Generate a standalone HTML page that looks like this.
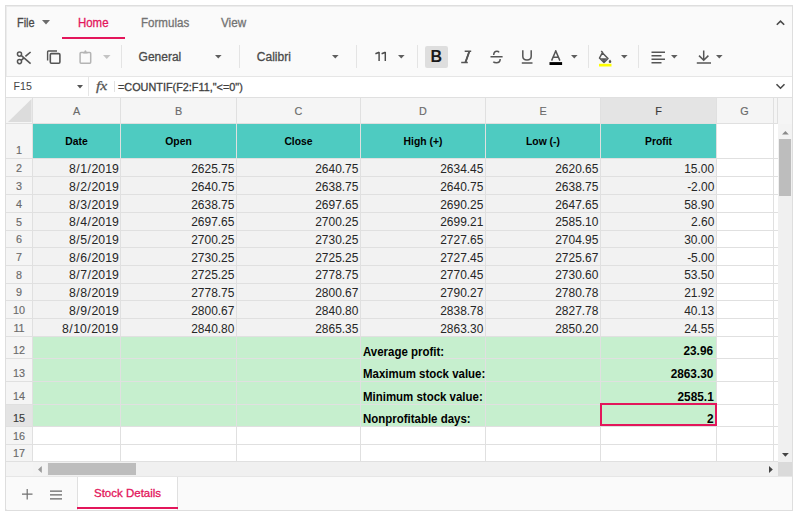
<!DOCTYPE html><html><head><meta charset="utf-8"><style>
*{box-sizing:border-box;margin:0;padding:0}
html,body{width:800px;height:518px;overflow:hidden;background:#fff;font-family:"Liberation Sans", sans-serif}
.a{position:absolute}
.t{position:absolute;white-space:nowrap;line-height:1}
.rb{-webkit-text-stroke:0.3px currentColor}
.lb{-webkit-text-stroke:0.15px currentColor}
.hl{position:absolute;height:1px;background:#e0e0e0}
.vl{position:absolute;width:1px;background:#e0e0e0}
.cell{position:absolute;white-space:nowrap;font-size:12px;color:#000;line-height:1}
</style></head><body>
<div class="a" style="left:5px;top:5px;width:788px;height:506px;border:1px solid #dedede;box-shadow:inset 1px 1px 0 #ececec;background:#fafafa"></div>
<div class="t rb" style="left:17px;top:17px;font-size:12px;color:#4a4a4a;transform-origin:left;transform:scaleX(0.91)">File</div>
<svg class="a" style="left:42px;top:20px" width="8" height="5"><path d="M0 0H8L4 4.5Z" fill="#6b6b6b"/></svg>
<div class="t rb" style="left:77.7px;top:17px;font-size:12.3px;color:#e3165b;transform-origin:left;transform:scaleX(0.93)">Home</div>
<div class="a" style="left:62px;top:36.8px;width:63px;height:2px;background:#e3165b"></div>
<div class="t rb" style="left:140.6px;top:17px;font-size:12.3px;color:#737373;transform-origin:left;transform:scaleX(0.94)">Formulas</div>
<div class="t rb" style="left:221px;top:17px;font-size:12.3px;color:#737373;transform-origin:left;transform:scaleX(0.95)">View</div>
<svg class="a" style="left:775px;top:17.6px" width="11" height="9"><path d="M1.8 6.8L5.5 3.1L9.2 6.8" stroke="#4a4a4a" stroke-width="1.6" fill="none"/></svg>
<svg class="a" style="left:15px;top:49.6px" width="17" height="15" viewBox="0 0 17 15">
<circle cx="4.5" cy="4.1" r="2.05" stroke="#555" stroke-width="1.5" fill="none"/>
<circle cx="4.5" cy="11.6" r="2.05" stroke="#555" stroke-width="1.5" fill="none"/>
<path d="M6.1 5.4L15.6 13.6" stroke="#555" stroke-width="1.6" fill="none"/>
<path d="M6.1 10.4L8.8 8.2" stroke="#555" stroke-width="1.6" fill="none"/>
<path d="M10.4 6.3L15.6 2" stroke="#555" stroke-width="1.6" fill="none"/>
</svg>
<svg class="a" style="left:46px;top:49px" width="16" height="16" viewBox="0 0 16 16">
<path d="M1.6 11.6V2.8Q1.6 2 2.4 2H11" stroke="#555" stroke-width="1.4" fill="none"/>
<rect x="4.3" y="4.6" width="9.6" height="9.6" rx="1.1" stroke="#555" stroke-width="1.6" fill="none"/>
</svg>
<svg class="a" style="left:78px;top:49px" width="15" height="16" viewBox="0 0 15 16">
<rect x="2.1" y="3.6" width="10.6" height="10.6" rx="0.9" stroke="#b4b4b4" stroke-width="1.5" fill="none"/>
<path d="M5.2 4.6V3.3H6.2Q6.3 1.2 7.4 1.2Q8.5 1.2 8.6 3.3H9.6V4.6Z" fill="#b4b4b4"/>
</svg>
<svg class="a" style="left:103px;top:55px" width="8" height="5"><path d="M0 0H7.5L3.75 4Z" fill="#c4c4c4"/></svg>
<div class="a" style="left:121px;top:45px;width:1px;height:23px;background:#e4e4e4"></div>
<div class="t rb" style="left:138.6px;top:51px;font-size:12px;color:#4a4a4a">General</div>
<svg class="a" style="left:214.5px;top:55px" width="8" height="5"><path d="M0 0H6.6L3.3 3.5Z" fill="#5e5e5e"/></svg>
<div class="a" style="left:239px;top:45px;width:1px;height:23px;background:#e4e4e4"></div>
<div class="t rb" style="left:256.8px;top:51px;font-size:12px;color:#4a4a4a">Calibri</div>
<svg class="a" style="left:332px;top:55px" width="8" height="5"><path d="M0 0H6.6L3.3 3.5Z" fill="#5e5e5e"/></svg>
<div class="a" style="left:356px;top:45px;width:1px;height:23px;background:#e4e4e4"></div>
<svg class="a" style="left:374px;top:51px" width="14" height="11" viewBox="0 0 14 11"><path d="M5.1 1.1V10M5.3 1.2L1.4 2.7M11.3 1.1V10M11.5 1.2L7.6 2.7" stroke="#4a4a4a" stroke-width="1.45" fill="none"/></svg>
<svg class="a" style="left:397.6px;top:55px" width="8" height="5"><path d="M0 0H6.6L3.3 3.5Z" fill="#5e5e5e"/></svg>
<div class="a" style="left:417px;top:45px;width:1px;height:23px;background:#e4e4e4"></div>
<div class="a" style="left:424.5px;top:46px;width:23px;height:22px;background:#dedede;border-radius:2px"></div>
<div class="t" style="left:430.6px;top:49.1px;font-size:16px;font-weight:bold;color:#1a1a1a">B</div>
<svg class="a" style="left:460px;top:50px" width="13" height="14" viewBox="0 0 13 14">
<path d="M4.7 1.2H11.2M1.2 12.5H7.8M9.4 1.2L5.4 12.5" stroke="#555" stroke-width="1.5" fill="none"/><path d="M9.4 1.2L5.4 12.5" stroke="#555" stroke-width="1.9" fill="none"/></svg>
<svg class="a" style="left:489px;top:50px" width="15" height="14" viewBox="0 0 15 14">
<path d="M4.7 4.9C4.7 2.3 6.1 1.3 7.9 1.3C8.9 1.3 9.7 1.7 10.1 2.3M1.5 6.7H13.6M11.2 9C11.2 11.8 9.5 12.8 7.4 12.8C6 12.8 4.8 12.3 4.3 11.7" stroke="#555" stroke-width="1.5" fill="none"/></svg>
<svg class="a" style="left:519.5px;top:49px" width="14" height="16" viewBox="0 0 14 16">
<path d="M2.8 1.2V7.3Q2.8 11 7 11Q11.2 11 11.2 7.3V1.2M1.8 13.9H12.5" stroke="#555" stroke-width="1.5" fill="none"/></svg>
<svg class="a" style="left:549px;top:50px" width="14" height="16" viewBox="0 0 14 16">
<path d="M2.6 10.6L6.75 0.9L10.9 10.6M4.1 7.2H9.4" stroke="#555" stroke-width="1.5" fill="none"/>
<rect x="0.5" y="12.1" width="12.6" height="2.9" fill="#000"/></svg>
<svg class="a" style="left:571px;top:55px" width="8" height="5"><path d="M0 0H6.6L3.3 3.5Z" fill="#5e5e5e"/></svg>
<div class="a" style="left:588px;top:45px;width:1px;height:23px;background:#e4e4e4"></div>
<svg class="a" style="left:598.3px;top:49.7px" width="15" height="17" viewBox="0 0 15 17">
<path d="M3.2 1L5 2.8M4.3 2.8L10 8.5L6 12.5L1.5 8Z" stroke="#555" stroke-width="1.5" fill="none" stroke-linejoin="round"/>
<path d="M2.6 8.3L9.3 8.3L6 11.6Z" fill="#555"/>
<path d="M12 9.5Q13.3 11 13.3 11.8A1.3 1.3 0 0 1 10.7 11.8Q10.7 11 12 9.5Z" fill="#555"/>
<rect x="1" y="13.8" width="12.5" height="2.7" fill="#ffff00"/></svg>
<svg class="a" style="left:620.5px;top:55px" width="8" height="5"><path d="M0 0H6.6L3.3 3.5Z" fill="#5e5e5e"/></svg>
<div class="a" style="left:638px;top:45px;width:1px;height:23px;background:#e4e4e4"></div>
<svg class="a" style="left:651.3px;top:50.6px" width="15" height="14" viewBox="0 0 15 14">
<path d="M0.5 1.3H14M0.5 4.8H10.5M0.5 8.3H14M0.5 11.8H10.5" stroke="#555" stroke-width="1.5" fill="none"/></svg>
<svg class="a" style="left:670.7px;top:55.2px" width="8" height="5"><path d="M0 0H6.6L3.3 3.5Z" fill="#5e5e5e"/></svg>
<svg class="a" style="left:696.3px;top:49.3px" width="16" height="16" viewBox="0 0 16 16">
<path d="M7.7 1.5V11M3 6.6L7.7 11.3L12.4 6.6M0.8 14H15" stroke="#555" stroke-width="1.5" fill="none"/></svg>
<svg class="a" style="left:716.3px;top:55.2px" width="8" height="5"><path d="M0 0H6.6L3.3 3.5Z" fill="#5e5e5e"/></svg>
<div class="a" style="left:6px;top:76px;width:786px;height:22px;background:#fff;border-top:1px solid #e6e6e6;border-bottom:1px solid #e0e0e0"></div>
<div class="a" style="left:88px;top:77px;width:1px;height:19px;background:#e6e6e6"></div>
<div class="t" style="left:13.6px;top:81px;font-size:10.6px;color:#444">F15</div>
<svg class="a" style="left:76.5px;top:85px" width="7" height="4"><path d="M0 0H6L3 3.5Z" fill="#555"/></svg>
<div class="t" style="left:95.5px;top:80.5px;font-size:14px;transform-origin:left top;transform:scale(1.12,0.85);font-style:italic;font-family:'Liberation Serif',serif;color:#555;-webkit-text-stroke:0.3px #555">fx</div>
<div class="a" style="left:114px;top:81px;width:1px;height:11px;background:#e2e2e2"></div>
<div class="t rb" style="left:118px;top:81.6px;font-size:10.7px;color:#3f3f3f;transform-origin:left;transform:scaleX(1.015)">=COUNTIF(F2:F11,"&lt;=0")</div>
<svg class="a" style="left:775px;top:83px" width="11" height="7"><path d="M1.5 1.2L5.5 5.2L9.5 1.2" stroke="#4a4a4a" stroke-width="1.6" fill="none"/></svg>
<div class="a" style="left:6px;top:98px;width:772px;height:364px;background:#fff"></div>
<div class="a" style="left:6px;top:98px;width:772px;height:25px;background:#f5f5f5"></div>
<div class="a" style="left:6px;top:98px;width:26px;height:364px;background:#f5f5f5"></div>
<div class="a" style="left:601px;top:98px;width:115px;height:25px;background:#e4e4e4"></div>
<div class="a" style="left:6px;top:405px;width:26px;height:21px;background:#e4e4e4"></div>
<svg class="a" style="left:8px;top:99px" width="23.5" height="23"><path d="M23.5 0V23H0Z" fill="#dcdcdc"/></svg>
<div class="a" style="left:33px;top:124px;width:683px;height:34.5px;background:#4ecbc1"></div>
<div class="a" style="left:33px;top:158.5px;width:683px;height:177.79000000000002px;background:#f2f2f2"></div>
<div class="a" style="left:33px;top:336.29px;width:683px;height:90.10999999999996px;background:#c6efce"></div>
<div class="hl" style="left:6px;top:123px;width:772px"></div>
<div class="hl" style="left:6px;top:158px;width:772px"></div>
<div class="hl" style="left:6px;top:176px;width:772px"></div>
<div class="hl" style="left:6px;top:194px;width:772px"></div>
<div class="hl" style="left:6px;top:212px;width:772px"></div>
<div class="hl" style="left:6px;top:230px;width:772px"></div>
<div class="hl" style="left:6px;top:247px;width:772px"></div>
<div class="hl" style="left:6px;top:265px;width:772px"></div>
<div class="hl" style="left:6px;top:283px;width:772px"></div>
<div class="hl" style="left:6px;top:300px;width:772px"></div>
<div class="hl" style="left:6px;top:318px;width:772px"></div>
<div class="hl" style="left:6px;top:336px;width:772px"></div>
<div class="hl" style="left:6px;top:358px;width:772px"></div>
<div class="hl" style="left:6px;top:381px;width:772px"></div>
<div class="hl" style="left:6px;top:404px;width:772px"></div>
<div class="hl" style="left:6px;top:426px;width:772px"></div>
<div class="hl" style="left:6px;top:444px;width:772px"></div>
<div class="hl" style="left:6px;top:461px;width:772px"></div>
<div class="vl" style="left:32px;top:98px;height:364px"></div>
<div class="vl" style="left:120px;top:98px;height:364px"></div>
<div class="vl" style="left:236px;top:98px;height:364px"></div>
<div class="vl" style="left:360px;top:98px;height:364px"></div>
<div class="vl" style="left:485px;top:98px;height:364px"></div>
<div class="vl" style="left:600px;top:98px;height:364px"></div>
<div class="vl" style="left:716px;top:98px;height:364px"></div>
<div class="vl" style="left:773px;top:98px;height:364px"></div>
<div class="vl" style="left:777px;top:98px;height:25px"></div>
<div class="t lb" style="left:33px;width:87px;text-align:center;top:105.8px;font-size:10.8px;color:#6a6a6a">A</div>
<div class="t lb" style="left:121px;width:115px;text-align:center;top:105.8px;font-size:10.8px;color:#6a6a6a">B</div>
<div class="t lb" style="left:237px;width:123px;text-align:center;top:105.8px;font-size:10.8px;color:#6a6a6a">C</div>
<div class="t lb" style="left:361px;width:124px;text-align:center;top:105.8px;font-size:10.8px;color:#6a6a6a">D</div>
<div class="t lb" style="left:486px;width:114px;text-align:center;top:105.8px;font-size:10.8px;color:#6a6a6a">E</div>
<div class="t lb" style="left:601px;width:115px;text-align:center;top:105.8px;font-size:10.8px;color:#3a3a3a">F</div>
<div class="t lb" style="left:717px;width:55px;text-align:center;top:105.8px;font-size:10.8px;color:#6a6a6a">G</div>
<div class="t lb" style="left:6px;width:26px;text-align:center;top:145.00px;font-size:10.8px;color:#6a6a6a">1</div>
<div class="t lb" style="left:6px;width:26px;text-align:center;top:163.40px;font-size:10.8px;color:#6a6a6a">2</div>
<div class="t lb" style="left:6px;width:26px;text-align:center;top:181.11px;font-size:10.8px;color:#6a6a6a">3</div>
<div class="t lb" style="left:6px;width:26px;text-align:center;top:198.82px;font-size:10.8px;color:#6a6a6a">4</div>
<div class="t lb" style="left:6px;width:26px;text-align:center;top:216.53px;font-size:10.8px;color:#6a6a6a">5</div>
<div class="t lb" style="left:6px;width:26px;text-align:center;top:234.24px;font-size:10.8px;color:#6a6a6a">6</div>
<div class="t lb" style="left:6px;width:26px;text-align:center;top:251.95px;font-size:10.8px;color:#6a6a6a">7</div>
<div class="t lb" style="left:6px;width:26px;text-align:center;top:269.66px;font-size:10.8px;color:#6a6a6a">8</div>
<div class="t lb" style="left:6px;width:26px;text-align:center;top:287.37px;font-size:10.8px;color:#6a6a6a">9</div>
<div class="t lb" style="left:6px;width:26px;text-align:center;top:305.08px;font-size:10.8px;color:#6a6a6a">10</div>
<div class="t lb" style="left:6px;width:26px;text-align:center;top:322.79px;font-size:10.8px;color:#6a6a6a">11</div>
<div class="t lb" style="left:6px;width:26px;text-align:center;top:345.40px;font-size:10.8px;color:#6a6a6a">12</div>
<div class="t lb" style="left:6px;width:26px;text-align:center;top:367.90px;font-size:10.8px;color:#6a6a6a">13</div>
<div class="t lb" style="left:6px;width:26px;text-align:center;top:390.70px;font-size:10.8px;color:#6a6a6a">14</div>
<div class="t lb" style="left:6px;width:26px;text-align:center;top:412.90px;font-size:10.8px;color:#3a3a3a">15</div>
<div class="t lb" style="left:6px;width:26px;text-align:center;top:430.50px;font-size:10.8px;color:#6a6a6a">16</div>
<div class="t lb" style="left:6px;width:26px;text-align:center;top:447.80px;font-size:10.8px;color:#6a6a6a">17</div>
<div class="cell" style="left:33px;width:87px;text-align:center;top:136.1px;font-weight:bold;font-size:11.5px;transform:scaleX(0.9)">Date</div>
<div class="cell" style="left:121px;width:115px;text-align:center;top:136.1px;font-weight:bold;font-size:11.5px;transform:scaleX(0.9)">Open</div>
<div class="cell" style="left:237px;width:123px;text-align:center;top:136.1px;font-weight:bold;font-size:11.5px;transform:scaleX(0.9)">Close</div>
<div class="cell" style="left:361px;width:124px;text-align:center;top:136.1px;font-weight:bold;font-size:11.5px;transform:scaleX(0.9)">High (+)</div>
<div class="cell" style="left:486px;width:114px;text-align:center;top:136.1px;font-weight:bold;font-size:11.5px;transform:scaleX(0.9)">Low (-)</div>
<div class="cell" style="left:601px;width:115px;text-align:center;top:136.1px;font-weight:bold;font-size:11.5px;transform:scaleX(0.9)">Profit</div>
<div class="cell" style="right:681.6px;top:163.20px;font-size:12px;color:#262626;transform-origin:right;transform:scaleX(1.02)">8<span style="margin:0 0.5px">/</span>1<span style="margin:0 0.5px">/</span>2019</div>
<div class="cell" style="right:565.6px;top:163.20px;font-size:12px;color:#262626;transform-origin:right;transform:scaleX(0.995)">2625.75</div>
<div class="cell" style="right:441.6px;top:163.20px;font-size:12px;color:#262626;transform-origin:right;transform:scaleX(0.995)">2640.75</div>
<div class="cell" style="right:316.6px;top:163.20px;font-size:12px;color:#262626;transform-origin:right;transform:scaleX(0.995)">2634.45</div>
<div class="cell" style="right:201.60000000000002px;top:163.20px;font-size:12px;color:#262626;transform-origin:right;transform:scaleX(0.995)">2620.65</div>
<div class="cell" style="right:85.60000000000002px;top:163.20px;font-size:12px;color:#262626;transform-origin:right;transform:scaleX(0.995)">15.00</div>
<div class="cell" style="right:681.6px;top:180.91px;font-size:12px;color:#262626;transform-origin:right;transform:scaleX(1.02)">8<span style="margin:0 0.5px">/</span>2<span style="margin:0 0.5px">/</span>2019</div>
<div class="cell" style="right:565.6px;top:180.91px;font-size:12px;color:#262626;transform-origin:right;transform:scaleX(0.995)">2640.75</div>
<div class="cell" style="right:441.6px;top:180.91px;font-size:12px;color:#262626;transform-origin:right;transform:scaleX(0.995)">2638.75</div>
<div class="cell" style="right:316.6px;top:180.91px;font-size:12px;color:#262626;transform-origin:right;transform:scaleX(0.995)">2640.75</div>
<div class="cell" style="right:201.60000000000002px;top:180.91px;font-size:12px;color:#262626;transform-origin:right;transform:scaleX(0.995)">2638.75</div>
<div class="cell" style="right:85.60000000000002px;top:180.91px;font-size:12px;color:#262626;transform-origin:right;transform:scaleX(0.995)">-2.00</div>
<div class="cell" style="right:681.6px;top:198.62px;font-size:12px;color:#262626;transform-origin:right;transform:scaleX(1.02)">8<span style="margin:0 0.5px">/</span>3<span style="margin:0 0.5px">/</span>2019</div>
<div class="cell" style="right:565.6px;top:198.62px;font-size:12px;color:#262626;transform-origin:right;transform:scaleX(0.995)">2638.75</div>
<div class="cell" style="right:441.6px;top:198.62px;font-size:12px;color:#262626;transform-origin:right;transform:scaleX(0.995)">2697.65</div>
<div class="cell" style="right:316.6px;top:198.62px;font-size:12px;color:#262626;transform-origin:right;transform:scaleX(0.995)">2690.25</div>
<div class="cell" style="right:201.60000000000002px;top:198.62px;font-size:12px;color:#262626;transform-origin:right;transform:scaleX(0.995)">2647.65</div>
<div class="cell" style="right:85.60000000000002px;top:198.62px;font-size:12px;color:#262626;transform-origin:right;transform:scaleX(0.995)">58.90</div>
<div class="cell" style="right:681.6px;top:216.33px;font-size:12px;color:#262626;transform-origin:right;transform:scaleX(1.02)">8<span style="margin:0 0.5px">/</span>4<span style="margin:0 0.5px">/</span>2019</div>
<div class="cell" style="right:565.6px;top:216.33px;font-size:12px;color:#262626;transform-origin:right;transform:scaleX(0.995)">2697.65</div>
<div class="cell" style="right:441.6px;top:216.33px;font-size:12px;color:#262626;transform-origin:right;transform:scaleX(0.995)">2700.25</div>
<div class="cell" style="right:316.6px;top:216.33px;font-size:12px;color:#262626;transform-origin:right;transform:scaleX(0.995)">2699.21</div>
<div class="cell" style="right:201.60000000000002px;top:216.33px;font-size:12px;color:#262626;transform-origin:right;transform:scaleX(0.995)">2585.10</div>
<div class="cell" style="right:85.60000000000002px;top:216.33px;font-size:12px;color:#262626;transform-origin:right;transform:scaleX(0.995)">2.60</div>
<div class="cell" style="right:681.6px;top:234.04px;font-size:12px;color:#262626;transform-origin:right;transform:scaleX(1.02)">8<span style="margin:0 0.5px">/</span>5<span style="margin:0 0.5px">/</span>2019</div>
<div class="cell" style="right:565.6px;top:234.04px;font-size:12px;color:#262626;transform-origin:right;transform:scaleX(0.995)">2700.25</div>
<div class="cell" style="right:441.6px;top:234.04px;font-size:12px;color:#262626;transform-origin:right;transform:scaleX(0.995)">2730.25</div>
<div class="cell" style="right:316.6px;top:234.04px;font-size:12px;color:#262626;transform-origin:right;transform:scaleX(0.995)">2727.65</div>
<div class="cell" style="right:201.60000000000002px;top:234.04px;font-size:12px;color:#262626;transform-origin:right;transform:scaleX(0.995)">2704.95</div>
<div class="cell" style="right:85.60000000000002px;top:234.04px;font-size:12px;color:#262626;transform-origin:right;transform:scaleX(0.995)">30.00</div>
<div class="cell" style="right:681.6px;top:251.75px;font-size:12px;color:#262626;transform-origin:right;transform:scaleX(1.02)">8<span style="margin:0 0.5px">/</span>6<span style="margin:0 0.5px">/</span>2019</div>
<div class="cell" style="right:565.6px;top:251.75px;font-size:12px;color:#262626;transform-origin:right;transform:scaleX(0.995)">2730.25</div>
<div class="cell" style="right:441.6px;top:251.75px;font-size:12px;color:#262626;transform-origin:right;transform:scaleX(0.995)">2725.25</div>
<div class="cell" style="right:316.6px;top:251.75px;font-size:12px;color:#262626;transform-origin:right;transform:scaleX(0.995)">2727.45</div>
<div class="cell" style="right:201.60000000000002px;top:251.75px;font-size:12px;color:#262626;transform-origin:right;transform:scaleX(0.995)">2725.67</div>
<div class="cell" style="right:85.60000000000002px;top:251.75px;font-size:12px;color:#262626;transform-origin:right;transform:scaleX(0.995)">-5.00</div>
<div class="cell" style="right:681.6px;top:269.46px;font-size:12px;color:#262626;transform-origin:right;transform:scaleX(1.02)">8<span style="margin:0 0.5px">/</span>7<span style="margin:0 0.5px">/</span>2019</div>
<div class="cell" style="right:565.6px;top:269.46px;font-size:12px;color:#262626;transform-origin:right;transform:scaleX(0.995)">2725.25</div>
<div class="cell" style="right:441.6px;top:269.46px;font-size:12px;color:#262626;transform-origin:right;transform:scaleX(0.995)">2778.75</div>
<div class="cell" style="right:316.6px;top:269.46px;font-size:12px;color:#262626;transform-origin:right;transform:scaleX(0.995)">2770.45</div>
<div class="cell" style="right:201.60000000000002px;top:269.46px;font-size:12px;color:#262626;transform-origin:right;transform:scaleX(0.995)">2730.60</div>
<div class="cell" style="right:85.60000000000002px;top:269.46px;font-size:12px;color:#262626;transform-origin:right;transform:scaleX(0.995)">53.50</div>
<div class="cell" style="right:681.6px;top:287.17px;font-size:12px;color:#262626;transform-origin:right;transform:scaleX(1.02)">8<span style="margin:0 0.5px">/</span>8<span style="margin:0 0.5px">/</span>2019</div>
<div class="cell" style="right:565.6px;top:287.17px;font-size:12px;color:#262626;transform-origin:right;transform:scaleX(0.995)">2778.75</div>
<div class="cell" style="right:441.6px;top:287.17px;font-size:12px;color:#262626;transform-origin:right;transform:scaleX(0.995)">2800.67</div>
<div class="cell" style="right:316.6px;top:287.17px;font-size:12px;color:#262626;transform-origin:right;transform:scaleX(0.995)">2790.27</div>
<div class="cell" style="right:201.60000000000002px;top:287.17px;font-size:12px;color:#262626;transform-origin:right;transform:scaleX(0.995)">2780.78</div>
<div class="cell" style="right:85.60000000000002px;top:287.17px;font-size:12px;color:#262626;transform-origin:right;transform:scaleX(0.995)">21.92</div>
<div class="cell" style="right:681.6px;top:304.88px;font-size:12px;color:#262626;transform-origin:right;transform:scaleX(1.02)">8<span style="margin:0 0.5px">/</span>9<span style="margin:0 0.5px">/</span>2019</div>
<div class="cell" style="right:565.6px;top:304.88px;font-size:12px;color:#262626;transform-origin:right;transform:scaleX(0.995)">2800.67</div>
<div class="cell" style="right:441.6px;top:304.88px;font-size:12px;color:#262626;transform-origin:right;transform:scaleX(0.995)">2840.80</div>
<div class="cell" style="right:316.6px;top:304.88px;font-size:12px;color:#262626;transform-origin:right;transform:scaleX(0.995)">2838.78</div>
<div class="cell" style="right:201.60000000000002px;top:304.88px;font-size:12px;color:#262626;transform-origin:right;transform:scaleX(0.995)">2827.78</div>
<div class="cell" style="right:85.60000000000002px;top:304.88px;font-size:12px;color:#262626;transform-origin:right;transform:scaleX(0.995)">40.13</div>
<div class="cell" style="right:681.6px;top:322.59px;font-size:12px;color:#262626;transform-origin:right;transform:scaleX(1.02)">8<span style="margin:0 0.5px">/</span>10<span style="margin:0 0.5px">/</span>2019</div>
<div class="cell" style="right:565.6px;top:322.59px;font-size:12px;color:#262626;transform-origin:right;transform:scaleX(0.995)">2840.80</div>
<div class="cell" style="right:441.6px;top:322.59px;font-size:12px;color:#262626;transform-origin:right;transform:scaleX(0.995)">2865.35</div>
<div class="cell" style="right:316.6px;top:322.59px;font-size:12px;color:#262626;transform-origin:right;transform:scaleX(0.995)">2863.30</div>
<div class="cell" style="right:201.60000000000002px;top:322.59px;font-size:12px;color:#262626;transform-origin:right;transform:scaleX(0.995)">2850.20</div>
<div class="cell" style="right:85.60000000000002px;top:322.59px;font-size:12px;color:#262626;transform-origin:right;transform:scaleX(0.995)">24.55</div>
<div class="cell" style="left:363.4px;top:345.80px;font-weight:bold;transform-origin:left;transform:scaleX(0.955)">Average profit:</div>
<div class="cell" style="right:86.5px;top:345.40px;font-weight:bold;transform-origin:right;transform:scaleX(0.985)">23.96</div>
<div class="cell" style="left:363.4px;top:368.30px;font-weight:bold;transform-origin:left;transform:scaleX(0.955)">Maximum stock value:</div>
<div class="cell" style="right:86.5px;top:367.90px;font-weight:bold;transform-origin:right;transform:scaleX(0.985)">2863.30</div>
<div class="cell" style="left:363.4px;top:391.10px;font-weight:bold;transform-origin:left;transform:scaleX(0.955)">Minimum stock value:</div>
<div class="cell" style="right:86.5px;top:390.70px;font-weight:bold;transform-origin:right;transform:scaleX(0.985)">2585.1</div>
<div class="cell" style="left:363.4px;top:413.30px;font-weight:bold;transform-origin:left;transform:scaleX(0.955)">Nonprofitable days:</div>
<div class="cell" style="right:86.5px;top:412.90px;font-weight:bold;transform-origin:right;transform:scaleX(0.985)">2</div>
<div class="a" style="left:600px;top:403px;width:117px;height:23px;border:2px solid #e3165b"></div>
<div class="a" style="left:778px;top:98px;width:14px;height:364px;background:#f0f0f0"></div>
<div class="a" style="left:778px;top:98px;width:14px;height:26px;background:#f5f5f5"></div>
<div class="a" style="left:778px;top:124px;width:14px;height:15px;background:#f3f3f3"></div>
<svg class="a" style="left:781.8px;top:130.5px" width="7" height="4"><path d="M0 3.6H6.8L3.4 0Z" fill="#8a8a8a"/></svg>
<div class="a" style="left:779px;top:139px;width:12px;height:57px;background:#bdbdbd"></div>
<svg class="a" style="left:781.8px;top:452.5px" width="7" height="4"><path d="M0 0H6.8L3.4 3.8Z" fill="#444"/></svg>
<div class="a" style="left:6px;top:462px;width:786px;height:14.5px;background:#f0f0f0"></div>
<div class="a" style="left:6px;top:462px;width:27px;height:14.5px;background:#f4f4f4"></div>
<div class="a" style="left:33px;top:462px;width:14px;height:14.5px;background:#f3f3f3"></div>
<svg class="a" style="left:37.8px;top:465.8px" width="4" height="7"><path d="M3.8 0V7L0 3.5Z" fill="#9a9a9a"/></svg>
<div class="a" style="left:47.6px;top:463.4px;width:88px;height:12px;background:#bdbdbd"></div>
<svg class="a" style="left:768.7px;top:465.8px" width="4" height="7"><path d="M0 0V7L3.8 3.5Z" fill="#444"/></svg>
<div class="a" style="left:778px;top:462px;width:14px;height:14.5px;background:#dadada"></div>
<div class="a" style="left:6px;top:476px;width:786px;height:33px;background:#fafafa;border-top:1px solid #e6e6e6"></div>
<svg class="a" style="left:22px;top:489px" width="11" height="11"><path d="M5.2 0V10.5M0 5.2H10.5" stroke="#707070" stroke-width="1.2"/></svg>
<svg class="a" style="left:49.5px;top:489.5px" width="12.5" height="10"><path d="M0 1H12.3M0 4.9H12.3M0 8.8H12.3" stroke="#666" stroke-width="1.25"/></svg>
<div class="a" style="left:77px;top:476.5px;width:101px;height:33px;background:#fff;border-left:1px solid #e0e0e0;border-right:1px solid #e0e0e0"></div>
<div class="t rb" style="left:94px;top:487.8px;font-size:11.5px;color:#e3165b">Stock Details</div>
<div class="a" style="left:77px;top:507px;width:101px;height:2px;background:#e3165b"></div>
</body></html>
